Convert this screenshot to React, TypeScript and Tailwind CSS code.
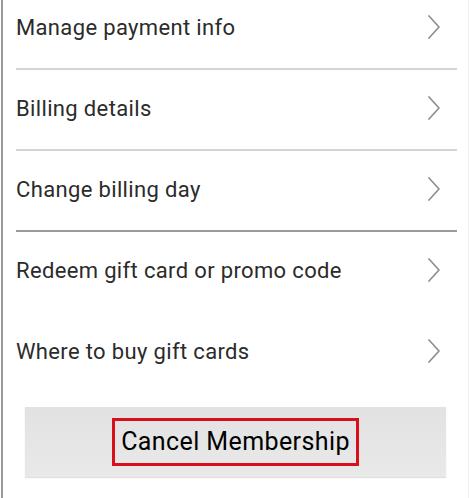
const items = [
  { label: "Manage payment info", divider: "border-[#d4d4d4]" },
  { label: "Billing details", divider: "border-[#d4d4d4]" },
  { label: "Change billing day", divider: "border-[#9a9a9a]" },
  { label: "Redeem gift card or promo code", divider: "border-transparent" },
  { label: "Where to buy gift cards", divider: "border-transparent" },
];

function Chevron() {
  return (
    <svg width="14" height="26" viewBox="0 0 14 26" fill="none" className="shrink-0">
      <path d="M2 2 L12 13 L2 24" stroke="#8f8f8f" strokeWidth="1.7" strokeLinecap="round" strokeLinejoin="round" />
    </svg>
  );
}

export default function App() {
  return (
    <div className="w-[469px] h-[498px] overflow-hidden bg-white pl-px">
      <div
        className="h-full border-l-2 border-r border-l-[#9a9a9a] border-r-[#efefef] flex flex-col"
        style={{ fontFamily: "Roboto, 'Liberation Sans', sans-serif" }}
      >
        {/* ── Menu rows ── */}
        <div className="-mt-[11px] pl-[13px] pr-[11px]">
          {items.map((it) => (
            <div
              key={it.label}
              className={`h-[81px] flex items-center justify-between pb-[3px] border-b-2 ${it.divider}`}
            >
              <span className="text-[22px] text-[#2b2b2b] tracking-[0.35px]">{it.label}</span>
              <div className="pr-[16px]">
                <Chevron />
              </div>
            </div>
          ))}
        </div>

        {/* ── Cancel button ── */}
        <div className="pl-[22px] pr-[22px] mt-[13px]">
          <button className="w-full h-[70px] flex items-center justify-center bg-gradient-to-b from-[#e2e2e2] to-[#e9e9e9] shadow-[0_1px_1px_rgba(0,0,0,0.12)]">
            <span className="border-[3px] border-[#d9101c] h-[48px] px-[6px] flex items-center text-[25px] tracking-[0.4px] text-black">
              Cancel Membership
            </span>
          </button>
        </div>
      </div>
    </div>
  );
}
